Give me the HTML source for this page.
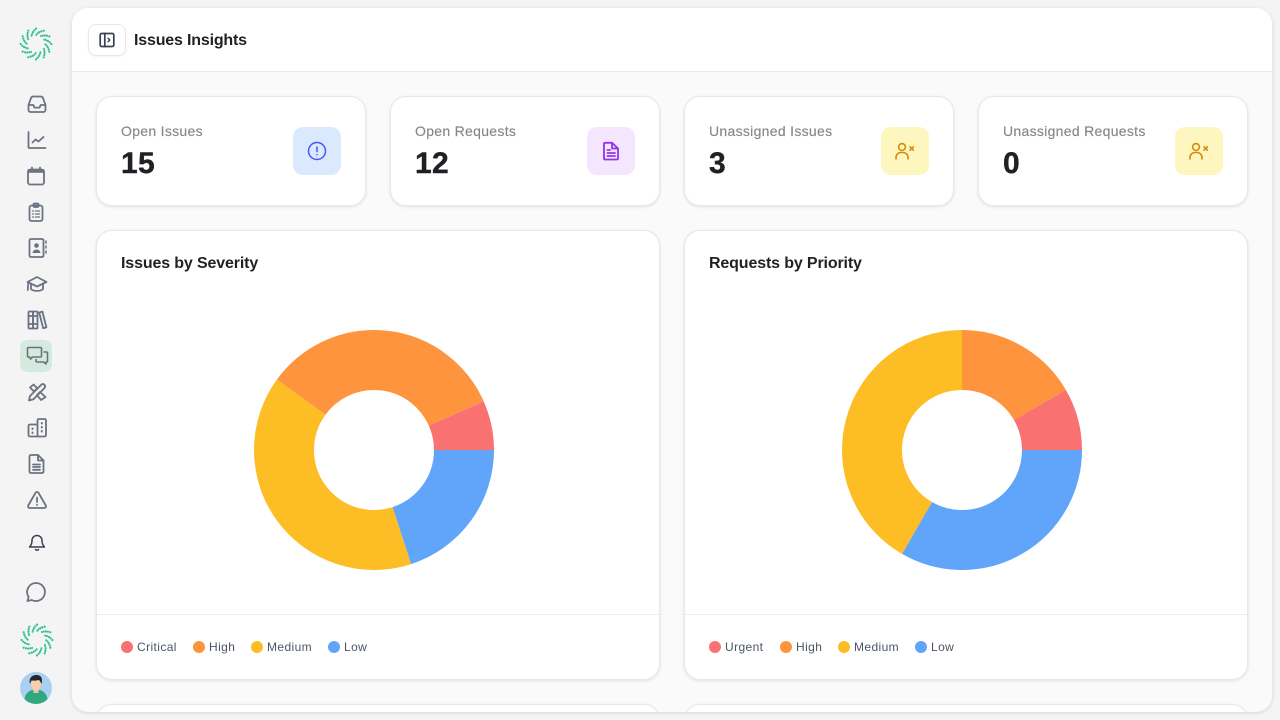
<!DOCTYPE html>
<html><head><meta charset="utf-8"><title>Issues Insights</title>
<style>
*{box-sizing:border-box;margin:0;padding:0}
html,body{width:1280px;height:720px;overflow:hidden;background:#f4f4f5;font-family:"Liberation Sans",sans-serif;color:#1f2125}
.abs{position:absolute}
.ic{position:absolute;width:24px;height:24px;fill:none;stroke:#6b7280;stroke-width:1.8;stroke-linecap:round;stroke-linejoin:round}
#active{position:absolute;left:20px;top:340px;width:32px;height:32px;border-radius:8px;background:#d4eadf}
#panel{position:absolute;left:72px;top:8px;width:1200px;height:704px;background:#fafafa;border-radius:16px;overflow:hidden;box-shadow:0 1px 4px rgba(0,0,0,.12)}
#head{position:absolute;left:0;top:0;width:1200px;height:64px;background:#fff;border-bottom:1px solid #e9e9eb}
#btn{position:absolute;left:16px;top:16px;width:38px;height:32px;border:1px solid #e8e8ea;border-radius:8px;background:#fff;box-shadow:0 1px 2px rgba(0,0,0,.05)}
#title{position:absolute;left:62px;top:24px;font-size:16px;line-height:18px;font-weight:700;letter-spacing:-.18px;white-space:nowrap}
.card{position:absolute;background:#fff;border:1px solid #e8e8ea;border-radius:16px;box-shadow:0 1px 3px rgba(0,0,0,.1)}
.stat{top:88px;width:270px;height:110px}
.lab{position:absolute;left:24px;top:26px;font-size:14px;line-height:16px;color:#85878c;letter-spacing:.3px;white-space:nowrap;-webkit-text-stroke:.15px #85878c}
.num{position:absolute;left:24px;top:49.500px;font-size:30px;line-height:34px;font-weight:700;color:#1f2125;letter-spacing:.3px;-webkit-text-stroke:.4px #1f2125}
.box{position:absolute;top:30px;width:48px;height:48px;border-radius:10px}
.chart{top:222px;width:564px;height:450px}
.ct{position:absolute;left:24px;top:23.500px;font-size:16px;line-height:18px;font-weight:700;color:#1f2125;white-space:nowrap;letter-spacing:-.14px}
.div{position:absolute;left:0;right:0;top:383px;height:1px;background:#ececee}
.dot{position:absolute;top:410px;width:12px;height:12px;border-radius:50%}
.lg{position:absolute;top:408px;font-size:12px;line-height:16px;color:#4b5563;white-space:nowrap;letter-spacing:.4px}
.donut{position:absolute;left:0;top:0;fill:none;stroke-width:60}
.more{top:696px;width:564px;height:16px;border-radius:16px 16px 0 0;border-bottom:0}
</style></head>
<body>
<svg width="0" height="0" style="position:absolute"><defs>
<g id="arm"><circle cx="0" cy="-15.400" r="1.100"/><circle cx="-1.700" cy="-13.700" r="1.100"/><circle cx="-3" cy="-11.900" r="1.100"/><circle cx="-3.900" cy="-10" r="1.050"/><circle cx="-4.400" cy="-8.200" r="1"/></g>
<g id="logo" fill="#2fc190"><use href="#arm"/><use href="#arm" transform="rotate(30)"/><use href="#arm" transform="rotate(60)"/><use href="#arm" transform="rotate(90)"/><use href="#arm" transform="rotate(120)"/><use href="#arm" transform="rotate(150)"/><use href="#arm" transform="rotate(180)"/><use href="#arm" transform="rotate(210)"/><use href="#arm" transform="rotate(240)"/><use href="#arm" transform="rotate(270)"/><use href="#arm" transform="rotate(300)"/><use href="#arm" transform="rotate(330)"/></g>
</defs></svg>

<div id="active"></div>
<svg class="abs" style="left:16px;top:24px" width="40" height="40" viewBox="-20 -20 40 40"><use href="#logo"/></svg>

<svg class="ic" style="left:25px;top:92px" viewBox="0 0 24 24"><path d="M3.500 13v5a2 2 0 0 0 2 2h13a2 2 0 0 0 2-2v-5M3.500 13l2.600-7.200A2.500 2.500 0 0 1 8.400 4.500h7.200a2.500 2.500 0 0 1 2.300 1.300L20.500 13M3.500 13h4.800l1.200 2.600h5l1.200-2.600h4.800"/></svg>
<svg class="ic" style="left:25px;top:128px" viewBox="0 0 24 24"><path d="M3.500 4v15a1 1 0 0 0 1 1h16M7.500 14.500l3-3 3 2 5-4.500"/></svg>
<svg class="ic" style="left:24px;top:164px" viewBox="0 0 24 24"><rect x="4" y="5.500" width="16" height="15" rx="2"/><path d="M4 7.500h16" stroke-width="2.600" stroke-linecap="butt"/><path d="M8 3.500v3M16 3.500v3"/></svg>
<svg class="ic" style="left:24px;top:200px" viewBox="0 0 24 24"><rect x="5.500" y="5.500" width="13" height="15.500" rx="2"/><rect x="9.500" y="3.500" width="5" height="3.500" rx="1"/><path d="M8.500 11h1M11.500 11h4M8.500 14h1M11.500 14h4M8.500 17h1M11.500 17h4" stroke-width="1.300"/></svg>
<svg class="ic" style="left:25px;top:236px" viewBox="0 0 24 24"><rect x="4.500" y="3" width="14" height="18" rx="1.500"/><circle cx="11.500" cy="9.500" r="2.300" fill="#6b7280" stroke="none"/><path d="M7.500 17a4 3.500 0 0 1 8 0z" fill="#6b7280" stroke="none"/><path d="M21 5v2M21 10v2M21 15v2" stroke-width="1.500"/></svg>
<svg class="ic" style="left:25px;top:272px" viewBox="0 0 24 24"><path d="M12 5L2.500 10 12 14.500 21.500 10z"/><path d="M6 12v5c2 2.500 10 2.500 12 0v-5"/><path d="M3.500 10.500c-.5 2.500-.7 5-.7 7.500"/></svg>
<svg class="ic" style="left:25px;top:308px" viewBox="0 0 24 24"><rect x="3.500" y="3.500" width="4.500" height="17" rx=".8"/><rect x="8" y="3.500" width="4.500" height="17" rx=".8"/><path d="M3.500 8h9M3.500 16h9"/><path d="M14.200 4.500l3.200-.9 4 15.800-3.200.9z"/></svg>
<svg class="ic" style="left:25px;top:344px;stroke-width:1.600" viewBox="0 0 24 24"><path d="M2.500 4.500a1 1 0 0 1 1-1h12a1 1 0 0 1 1 1v7.500a1 1 0 0 1-1 1H7.500l-2 2-1-2h-1a1 1 0 0 1-1-1z"/><path d="M19 8h2.500a1 1 0 0 1 1 1v8a1 1 0 0 1-1 1h-.5v2l-2.500-2h-6.500a1 1 0 0 1-1-1v-1.500"/></svg>
<svg class="ic" style="left:25px;top:380px" viewBox="0 0 24 24"><path d="M4 20.500l1-4.500L16.500 4.500a2.300 2.300 0 0 1 3.200 3.200L8.500 19.200z"/><path d="M8.500 4.500l-3.500 3 4 4 3.200-3.200zM15 12l-3 3 4 5 4.500-3z"/></svg>
<svg class="ic" style="left:25px;top:416px" viewBox="0 0 24 24"><path d="M12.500 20.500V8.500H5a1.500 1.500 0 0 0-1.500 1.500v9A1.500 1.500 0 0 0 5 20.500h14.500a1.500 1.500 0 0 0 1.500-1.500V4.500A1.500 1.500 0 0 0 19.500 3h-5.500a1.500 1.500 0 0 0-1.500 1.500v4"/><path d="M7.500 12.500v.5M7.500 16.500v.5M16.800 7v.5M16.800 11v.5M16.800 15v.5" stroke-width="2"/></svg>
<svg class="ic" style="left:24px;top:452px" viewBox="0 0 24 24"><path d="M14 3H7a1.500 1.500 0 0 0-1.500 1.500v15A1.500 1.500 0 0 0 7 21h11a1.500 1.500 0 0 0 1.500-1.500V8.500z"/><path d="M14 3v5.500h5.500M9 12.500h7M9 15h7M9 17.800h7"/></svg>
<svg class="ic" style="left:25px;top:488px" viewBox="0 0 24 24"><path d="M10.400 5a1.800 1.800 0 0 1 3.200 0l7.200 12.500A1.700 1.700 0 0 1 19.300 20H4.700a1.700 1.700 0 0 1-1.500-2.500z"/><path d="M12 9.500v4.500M12 16.700v.3"/></svg>
<svg class="ic" style="left:25px;top:530px;stroke:#374151;stroke-width:1.500" viewBox="0 0 24 24"><path d="M7 10.500a5 5 0 0 1 10 0c0 4 1.500 5.500 2.500 6.500h-15c1-1 2.500-2.500 2.500-6.500z"/><path d="M10.500 19.500a2 2 0 0 0 3 0"/></svg>
<svg class="ic" style="left:24px;top:580px" viewBox="0 0 24 24"><path d="M12 3a9 9 0 1 1-4.200 17L3.500 21l1.100-4.100A9 9 0 0 1 12 3z"/></svg>
<svg class="abs" style="left:17px;top:620px" width="40" height="40" viewBox="-20 -20 40 40"><use href="#logo"/></svg>
<svg class="abs" style="left:20px;top:672px" width="32" height="32" viewBox="0 0 32 32"><defs><clipPath id="av"><circle cx="16" cy="16" r="16"/></clipPath></defs><g clip-path="url(#av)"><rect width="32" height="32" fill="#a9d0f0"/><path d="M4 32c0-7 2-12 8-14l4 2 4-2c6 2 8 7 8 14z" fill="#2ea97d"/><rect x="13.500" y="15" width="5" height="6" fill="#f3c49b"/><ellipse cx="16" cy="12" rx="5" ry="6" fill="#f8d0ab"/><path d="M10 12c-1.500-6 2-9 6.500-9s6.500 3 5 9c-1-2-1.500-3.500-3-4-3 1-5.500 .5-7 .5-.5 1-1 2-1.500 3.500z" fill="#24272c"/></g></svg>

<div id="panel">
 <div id="head">
  <div id="btn"><svg style="position:absolute;left:10px;top:7px" width="16" height="16" viewBox="0 0 16 16" fill="none" stroke="#374151" stroke-width="1.700" stroke-linecap="round" stroke-linejoin="round"><rect x="1.200" y="1.500" width="13.600" height="13" rx="1.500"/><path d="M5.800 1.500v13"/><path d="M9 6.200L10.800 8 9 9.800" stroke-width="1.400"/></svg></div>
  <div id="title">Issues Insights</div>
 </div>

 <div class="card stat" style="left:24px"><div class="lab">Open Issues</div><div class="num">15</div>
  <div class="box" style="left:196px;background:#dbe9fe"><svg class="ic" style="left:12px;top:12px;stroke:#4559f5;stroke-width:1.500" viewBox="0 0 24 24"><circle cx="12" cy="12" r="8.500"/><path d="M12 8v4.500M12 15.600v.2"/></svg></div></div>
 <div class="card stat" style="left:318px"><div class="lab">Open Requests</div><div class="num">12</div>
  <div class="box" style="left:196px;background:#f3e6fe"><svg class="ic" style="left:12px;top:12px;stroke:#9333ea;stroke-width:1.800" viewBox="0 0 24 24"><path d="M13 3.800H6a1 1 0 0 0-1 1V19.500a1 1 0 0 0 1 1h12a1 1 0 0 0 1-1V9.500z"/><path d="M13 3.800v5.700h6M8.500 11h2.500M8.500 14h7.500M8.500 17h7.500"/></svg></div></div>
 <div class="card stat" style="left:612px"><div class="lab">Unassigned Issues</div><div class="num">3</div>
  <div class="box" style="left:196px;background:#fef6bf"><svg class="ic" style="left:12px;top:12px;stroke:#d98a0b;stroke-width:1.600" viewBox="0 0 24 24"><circle cx="9" cy="8" r="3.400"/><path d="M3 20v-1.500a5 5 0 0 1 5-5h2a5 5 0 0 1 5 5V20"/><path d="M17 7.800l3.400 3.400M20.400 7.800L17 11.200"/></svg></div></div>
 <div class="card stat" style="left:906px"><div class="lab">Unassigned Requests</div><div class="num">0</div>
  <div class="box" style="left:196px;background:#fef6bf"><svg class="ic" style="left:12px;top:12px;stroke:#d98a0b;stroke-width:1.600" viewBox="0 0 24 24"><circle cx="9" cy="8" r="3.400"/><path d="M3 20v-1.500a5 5 0 0 1 5-5h2a5 5 0 0 1 5 5V20"/><path d="M17 7.800l3.400 3.400M20.400 7.800L17 11.200"/></svg></div></div>

 <div class="card chart" style="left:24px"><div class="ct">Issues by Severity</div>
  <svg class="donut" width="562" height="380" viewBox="0 0 562 380">
   <path stroke="#60a5fa" d="M367 219A90 90 0 0 1 304.810 304.600"/>
   <path stroke="#fdbd24" d="M304.810 304.600A90 90 0 0 1 204.190 166.100"/>
   <path stroke="#fe943d" d="M204.190 166.100A90 90 0 0 1 359.220 182.390"/>
   <path stroke="#f97171" d="M359.220 182.390A90 90 0 0 1 367 219"/>
  </svg>
  <div class="div"></div>
  <span class="dot" style="left:24px;background:#f97171"></span><span class="lg" style="left:40px">Critical</span>
  <span class="dot" style="left:96px;background:#fe943d"></span><span class="lg" style="left:112px">High</span>
  <span class="dot" style="left:154px;background:#fdbd24"></span><span class="lg" style="left:170px">Medium</span>
  <span class="dot" style="left:231px;background:#60a5fa"></span><span class="lg" style="left:247px">Low</span>
 </div>
 <div class="card chart" style="left:612px"><div class="ct">Requests by Priority</div>
  <svg class="donut" width="562" height="380" viewBox="0 0 562 380">
   <path stroke="#60a5fa" d="M367 219A90 90 0 0 1 232 296.940"/>
   <path stroke="#fdbd24" d="M232 296.940A90 90 0 0 1 277 129"/>
   <path stroke="#fe943d" d="M277 129A90 90 0 0 1 354.940 174"/>
   <path stroke="#f97171" d="M354.940 174A90 90 0 0 1 367 219"/>
  </svg>
  <div class="div"></div>
  <span class="dot" style="left:24px;background:#f97171"></span><span class="lg" style="left:40px">Urgent</span>
  <span class="dot" style="left:95px;background:#fe943d"></span><span class="lg" style="left:111px">High</span>
  <span class="dot" style="left:153px;background:#fdbd24"></span><span class="lg" style="left:169px">Medium</span>
  <span class="dot" style="left:230px;background:#60a5fa"></span><span class="lg" style="left:246px">Low</span>
 </div>
 <div class="card more" style="left:24px"></div>
 <div class="card more" style="left:612px"></div>
</div>
</body></html>
